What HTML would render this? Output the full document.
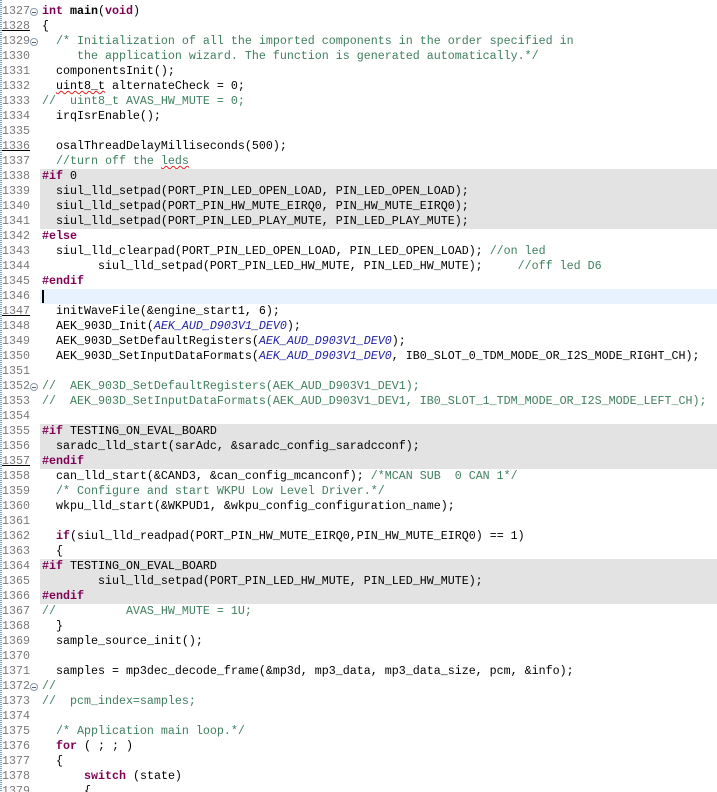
<!DOCTYPE html>
<html><head><meta charset="utf-8"><style>
html,body{margin:0;padding:0;background:#fff;width:717px;height:792px;overflow:hidden}
body{position:relative;font-family:"Liberation Mono","DejaVu Sans Mono",monospace;font-size:11.67px}
.l{position:absolute;left:0;width:717px;height:15px;line-height:15px}
.n{position:absolute;left:2px;top:0;width:28px;text-align:right;color:#787878;white-space:pre}
.c{position:absolute;left:42px;top:0;white-space:pre;color:#000}
.g .bg{position:absolute;left:40px;right:0;top:0;bottom:0;background:#e3e3e3}
.cur .bg{position:absolute;left:40px;right:0;top:0;bottom:0;background:#e8f2fe}
.k{color:#7f0055;font-weight:bold}
.m{color:#3f7f5f}
.i{color:#1f1fa0;font-style:italic}
.u{text-decoration:underline;text-decoration-color:#000}
.w{text-decoration:underline wavy #e02020;text-decoration-thickness:1px}
.f{position:absolute;left:30px;top:4px;width:6px;height:6px;border:1px solid #8a9aaa;border-radius:50%}
.f:after{content:"";position:absolute;left:1px;top:2.5px;width:4px;height:1px;background:#506070}
#edge{position:absolute;left:0;top:0;width:2px;height:792px;background:repeating-linear-gradient(#7aa6d6 0 1px,#fff 1px 2px)}
.caret{position:absolute;left:42px;top:1px;width:2px;height:13px;background:#000}
</style></head><body>
<div id="edge"></div>
<div class="l" style="top:4px"><span class="n">1327</span><span class="f"></span><span class="c"><span class="k">int</span> <b>main</b>(<span class="k">void</span>)</span></div>
<div class="l" style="top:19px"><span class="n u">1328</span><span class="c">{</span></div>
<div class="l" style="top:34px"><span class="n">1329</span><span class="f"></span><span class="c m">  /* Initialization of all the imported components in the order specified in</span></div>
<div class="l" style="top:49px"><span class="n">1330</span><span class="c m">     the application wizard. The function is generated automatically.*/</span></div>
<div class="l" style="top:64px"><span class="n">1331</span><span class="c">  componentsInit();</span></div>
<div class="l" style="top:79px"><span class="n">1332</span><span class="c">  <span class="w">uint8_t</span> alternateCheck = 0;</span></div>
<div class="l" style="top:94px"><span class="n">1333</span><span class="c m">//  uint8_t AVAS_HW_MUTE = 0;</span></div>
<div class="l" style="top:109px"><span class="n">1334</span><span class="c">  irqIsrEnable();</span></div>
<div class="l" style="top:124px"><span class="n">1335</span></div>
<div class="l" style="top:139px"><span class="n u">1336</span><span class="c">  osalThreadDelayMilliseconds(500);</span></div>
<div class="l" style="top:154px"><span class="n">1337</span><span class="c m">  //turn off the <span class="w">leds</span></span></div>
<div class="l g" style="top:169px"><div class="bg"></div><span class="n">1338</span><span class="c"><span class="k">#if</span> 0</span></div>
<div class="l g" style="top:184px"><div class="bg"></div><span class="n">1339</span><span class="c">  siul_lld_setpad(PORT_PIN_LED_OPEN_LOAD, PIN_LED_OPEN_LOAD);</span></div>
<div class="l g" style="top:199px"><div class="bg"></div><span class="n">1340</span><span class="c">  siul_lld_setpad(PORT_PIN_HW_MUTE_EIRQ0, PIN_HW_MUTE_EIRQ0);</span></div>
<div class="l g" style="top:214px"><div class="bg"></div><span class="n">1341</span><span class="c">  siul_lld_setpad(PORT_PIN_LED_PLAY_MUTE, PIN_LED_PLAY_MUTE);</span></div>
<div class="l" style="top:229px"><span class="n">1342</span><span class="c"><span class="k">#else</span></span></div>
<div class="l" style="top:244px"><span class="n">1343</span><span class="c">  siul_lld_clearpad(PORT_PIN_LED_OPEN_LOAD, PIN_LED_OPEN_LOAD); <span class="m">//on led</span></span></div>
<div class="l" style="top:259px"><span class="n">1344</span><span class="c">        siul_lld_setpad(PORT_PIN_LED_HW_MUTE, PIN_LED_HW_MUTE);     <span class="m">//off led D6</span></span></div>
<div class="l" style="top:274px"><span class="n">1345</span><span class="c"><span class="k">#endif</span></span></div>
<div class="l cur" style="top:289px"><div class="bg"></div><span class="n">1346</span><span class="caret"></span></div>
<div class="l" style="top:304px"><span class="n u">1347</span><span class="c">  initWaveFile(&amp;engine_start1, 6);</span></div>
<div class="l" style="top:319px"><span class="n">1348</span><span class="c">  AEK_903D_Init(<span class="i">AEK_AUD_D903V1_DEV0</span>);</span></div>
<div class="l" style="top:334px"><span class="n">1349</span><span class="c">  AEK_903D_SetDefaultRegisters(<span class="i">AEK_AUD_D903V1_DEV0</span>);</span></div>
<div class="l" style="top:349px"><span class="n">1350</span><span class="c">  AEK_903D_SetInputDataFormats(<span class="i">AEK_AUD_D903V1_DEV0</span>, IB0_SLOT_0_TDM_MODE_OR_I2S_MODE_RIGHT_CH);</span></div>
<div class="l" style="top:364px"><span class="n">1351</span></div>
<div class="l" style="top:379px"><span class="n">1352</span><span class="f"></span><span class="c m">//  AEK_903D_SetDefaultRegisters(AEK_AUD_D903V1_DEV1);</span></div>
<div class="l" style="top:394px"><span class="n">1353</span><span class="c m">//  AEK_903D_SetInputDataFormats(AEK_AUD_D903V1_DEV1, IB0_SLOT_1_TDM_MODE_OR_I2S_MODE_LEFT_CH);</span></div>
<div class="l" style="top:409px"><span class="n">1354</span></div>
<div class="l g" style="top:424px"><div class="bg"></div><span class="n">1355</span><span class="c"><span class="k">#if</span> TESTING_ON_EVAL_BOARD</span></div>
<div class="l g" style="top:439px"><div class="bg"></div><span class="n">1356</span><span class="c">  saradc_lld_start(sarAdc, &amp;saradc_config_saradcconf);</span></div>
<div class="l g" style="top:454px"><div class="bg"></div><span class="n u">1357</span><span class="c"><span class="k">#endif</span></span></div>
<div class="l" style="top:469px"><span class="n">1358</span><span class="c">  can_lld_start(&amp;CAND3, &amp;can_config_mcanconf); <span class="m">/*MCAN SUB  0 CAN 1*/</span></span></div>
<div class="l" style="top:484px"><span class="n">1359</span><span class="c m">  /* Configure and start WKPU Low Level Driver.*/</span></div>
<div class="l" style="top:499px"><span class="n">1360</span><span class="c">  wkpu_lld_start(&amp;WKPUD1, &amp;wkpu_config_configuration_name);</span></div>
<div class="l" style="top:514px"><span class="n">1361</span></div>
<div class="l" style="top:529px"><span class="n">1362</span><span class="c">  <span class="k">if</span>(siul_lld_readpad(PORT_PIN_HW_MUTE_EIRQ0,PIN_HW_MUTE_EIRQ0) == 1)</span></div>
<div class="l" style="top:544px"><span class="n">1363</span><span class="c">  {</span></div>
<div class="l g" style="top:559px"><div class="bg"></div><span class="n">1364</span><span class="c"><span class="k">#if</span> TESTING_ON_EVAL_BOARD</span></div>
<div class="l g" style="top:574px"><div class="bg"></div><span class="n">1365</span><span class="c">        siul_lld_setpad(PORT_PIN_LED_HW_MUTE, PIN_LED_HW_MUTE);</span></div>
<div class="l g" style="top:589px"><div class="bg"></div><span class="n">1366</span><span class="c"><span class="k">#endif</span></span></div>
<div class="l" style="top:604px"><span class="n">1367</span><span class="c m">//          AVAS_HW_MUTE = 1U;</span></div>
<div class="l" style="top:619px"><span class="n">1368</span><span class="c">  }</span></div>
<div class="l" style="top:634px"><span class="n">1369</span><span class="c">  sample_source_init();</span></div>
<div class="l" style="top:649px"><span class="n">1370</span></div>
<div class="l" style="top:664px"><span class="n">1371</span><span class="c">  samples = mp3dec_decode_frame(&amp;mp3d, mp3_data, mp3_data_size, pcm, &amp;info);</span></div>
<div class="l" style="top:679px"><span class="n">1372</span><span class="f"></span><span class="c m">//</span></div>
<div class="l" style="top:694px"><span class="n">1373</span><span class="c m">//  pcm_index=samples;</span></div>
<div class="l" style="top:709px"><span class="n">1374</span></div>
<div class="l" style="top:724px"><span class="n">1375</span><span class="c m">  /* Application main loop.*/</span></div>
<div class="l" style="top:739px"><span class="n">1376</span><span class="c">  <span class="k">for</span> ( ; ; )</span></div>
<div class="l" style="top:754px"><span class="n">1377</span><span class="c">  {</span></div>
<div class="l" style="top:769px"><span class="n">1378</span><span class="c">      <span class="k">switch</span> (state)</span></div>
<div class="l" style="top:784px"><span class="n">1379</span><span class="c">      {</span></div>
</body></html>
